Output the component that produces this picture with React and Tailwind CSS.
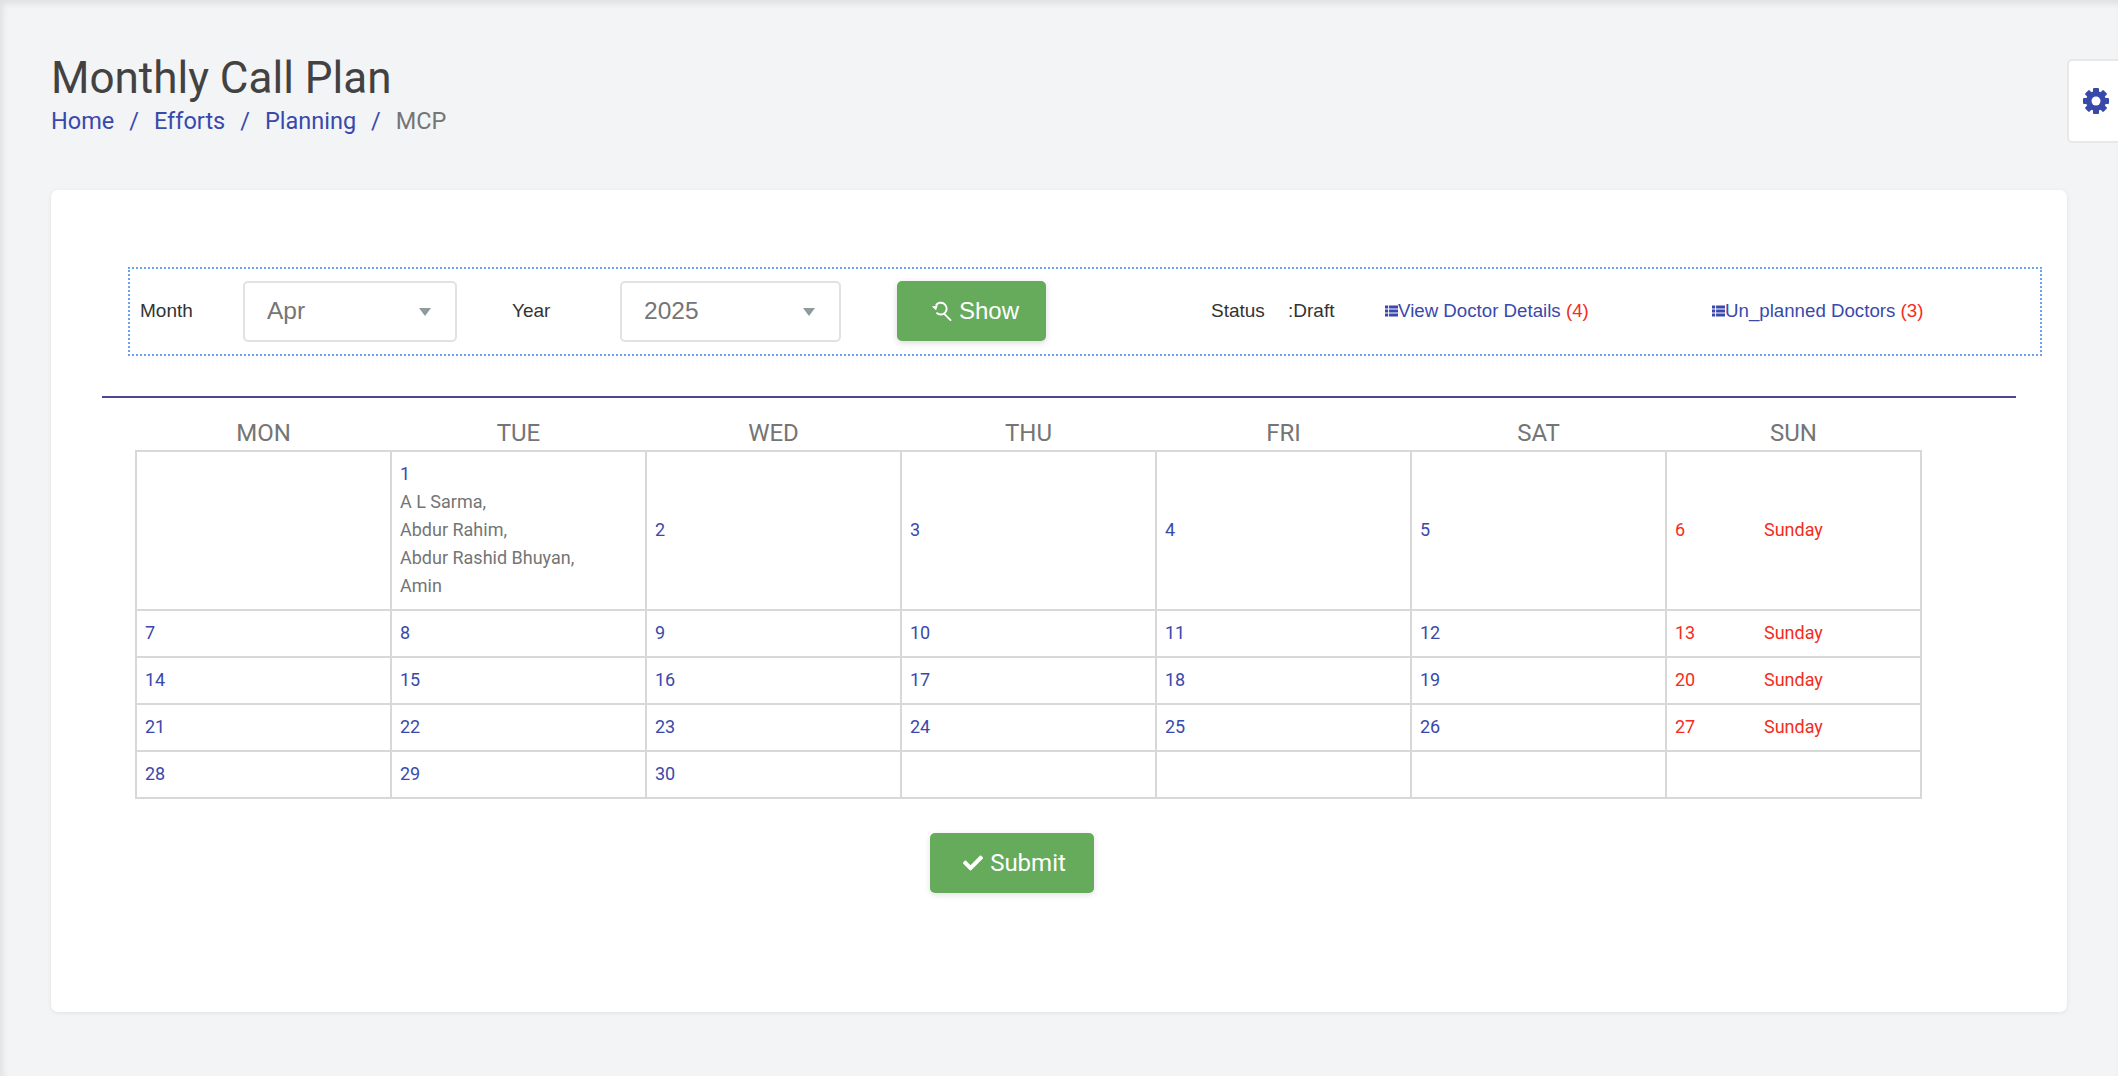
import React from 'react';
import { FaCheck } from 'react-icons/fa';

const DAYS = ['MON', 'TUE', 'WED', 'THU', 'FRI', 'SAT', 'SUN'];

// april 2025, null = blank cell
const WEEKS = [
  [null, 1, 2, 3, 4, 5, 6],
  [7, 8, 9, 10, 11, 12, 13],
  [14, 15, 16, 17, 18, 19, 20],
  [21, 22, 23, 24, 25, 26, 27],
  [28, 29, 30, null, null, null, null],
];

const PLANNED = ['A L Sarma,', 'Abdur Rahim,', 'Abdur Rashid Bhuyan,', 'Amin'];

function SelectBox({ value, className }) {
  return (
    <div className={`flex h-[61px] items-center justify-between rounded-[5px] border-2 border-[#e2e2e2] bg-white pl-[22px] pr-[24px] text-[24.5px] text-[#757575] ${className}`}>
      <span>{value}</span>
      <span className="h-0 w-0 border-x-[6.5px] border-t-[8px] border-x-transparent border-t-[#8f9a9c]" />
    </div>
  );
}

function ShowIcon() {
  return (
    <svg width="21" height="21" viewBox="0 0 20 20" fill="none" stroke="currentColor" strokeWidth="1.8" className="mr-[7px]">
      <path d="M4.6 4.2A5.6 5.6 0 1 1 5.2 11" />
      <path d="M0.8 5.2l4 3.6 1.6-4.4z" fill="currentColor" stroke="none" />
      <path d="M12.6 12.2l6 6" strokeLinecap="round" />
    </svg>
  );
}

function GearIcon() {
  return (
    <svg width="28" height="28" viewBox="0 0 28 28" className="text-[#3949ab]">
      <circle cx="14" cy="14" r="10" fill="currentColor" />
      {[0, 45, 90, 135, 180, 225, 270, 315].map((deg) => (
        <rect key={deg} x="11" y="1" width="6" height="6" rx="1" fill="currentColor" transform={`rotate(${deg} 14 14)`} />
      ))}
      <circle cx="14" cy="14" r="4.5" fill="#fff" />
    </svg>
  );
}

function ListIcon() {
  return (
    <svg width="13" height="12" viewBox="0 0 14 12" fill="currentColor">
      <path d="M0 0h3.4v3.4H0zM4.4 0H14v3.4H4.4zM0 4.3h3.4v3.4H0zM4.4 4.3H14v3.4H4.4zM0 8.6h3.4V12H0zM4.4 8.6H14V12H4.4z" />
    </svg>
  );
}

function DayCell({ day, dayIndex }) {
  if (day === null) return <td className="border-2 border-[#d8d8d8] px-[8px]" />;
  const isSunday = dayIndex === 6;
  return (
    <td className="border-2 border-[#d8d8d8] px-[8px] pb-[2px] align-middle leading-[28px]">
      {isSunday ? (
        <div className="flex text-[#f32d20]">
          <span className="w-[89px]">{day}</span>
          <span>Sunday</span>
        </div>
      ) : (
        <div className="text-[#3949ab]">{day}</div>
      )}
      {day === 1 && PLANNED.map((name) => (
        <div key={name} className="text-[#757575]">{name}</div>
      ))}
    </td>
  );
}

export default function App() {
  return (
    <div className="relative h-screen overflow-hidden bg-[#f3f4f6] pl-[51px] pt-[53px] shadow-[inset_3px_4px_6px_rgba(0,0,0,0.08)] font-['Roboto',sans-serif]">
      {/* settings tab */}
      <div className="absolute right-0 top-[59px] flex h-[84px] w-[51px] items-center rounded-l-[5px] border-2 border-r-0 border-[#e8e8e8] bg-white pl-[13px]">
        <GearIcon />
      </div>

      <h1 className="text-[44px] leading-[50px] text-[#424242]">Monthly Call Plan</h1>
      <div className="mt-[2px] flex text-[23.5px] leading-[32px] text-[#3949ab]">
        <span>Home</span>
        <span className="mx-[15px]">/</span>
        <span>Efforts</span>
        <span className="mx-[15px]">/</span>
        <span>Planning</span>
        <span className="mx-[15px]">/</span>
        <span className="text-[#757575]">MCP</span>
      </div>

      <div className="mt-[53px] h-[822px] w-[2016px] rounded-[7px] bg-white pl-[51px] pt-[77px] shadow-[0_1px_4px_rgba(0,0,0,0.08)]">
        {/* filter row */}
        <div className="ml-[26px] flex h-[89px] w-[1914px] items-center border-2 border-dotted border-[#6aa4e6] font-['Liberation_Sans',sans-serif] text-[19px] text-[#333]">
          <span className="ml-[10px] w-[103px]">Month</span>
          <SelectBox value="Apr" className="w-[214px]" />
          <span className="ml-[55px] w-[108px]">Year</span>
          <SelectBox value="2025" className="w-[221px]" />
          <button className="mb-[1px] ml-[56px] flex h-[60px] w-[149px] items-center justify-center rounded-[5px] bg-[#66ab5c] pl-[7px] text-[24px] text-white shadow-[0_2px_6px_rgba(0,0,0,0.15)]">
            <ShowIcon />
            Show
          </button>
          <span className="ml-[165px] w-[77px]">Status</span>
          <span className="w-[97px]">:Draft</span>
          <a className="flex w-[327px] items-center text-[18.7px] text-[#3949ab]">
            <ListIcon />
            View Doctor Details&nbsp;<span className="text-[#f32d20]">(4)</span>
          </a>
          <a className="flex items-center text-[18.7px] text-[#3949ab]">
            <ListIcon />
            Un_planned Doctors&nbsp;<span className="text-[#f32d20]">(3)</span>
          </a>
        </div>

        <div className="mt-[40px] h-[2px] w-[1914px] bg-[#4f4690]" />

        <table className="ml-[33px] mt-[18px] w-[1787px] table-fixed border-collapse text-[18px]">
          <thead>
            <tr className="h-[34px]">
              {DAYS.map((d) => (
                <th key={d} className="text-center align-top text-[24px] font-normal leading-[34px] text-[#757575]">{d}</th>
              ))}
            </tr>
          </thead>
          <tbody>
            {WEEKS.map((week, i) => (
              <tr key={i} className={i === 0 ? 'h-[159px]' : 'h-[47px]'}>
                {week.map((day, j) => (
                  <DayCell key={j} day={day} dayIndex={j} />
                ))}
              </tr>
            ))}
          </tbody>
        </table>

        <button className="ml-[828px] mt-[34px] flex h-[60px] w-[164px] items-center justify-center rounded-[5px] bg-[#66ab5c] pl-[5px] text-[24px] text-white shadow-[0_2px_6px_rgba(0,0,0,0.12)]">
          <FaCheck className="mr-[7px] text-[20px]" />
          Submit
        </button>
      </div>
    </div>
  );
}
